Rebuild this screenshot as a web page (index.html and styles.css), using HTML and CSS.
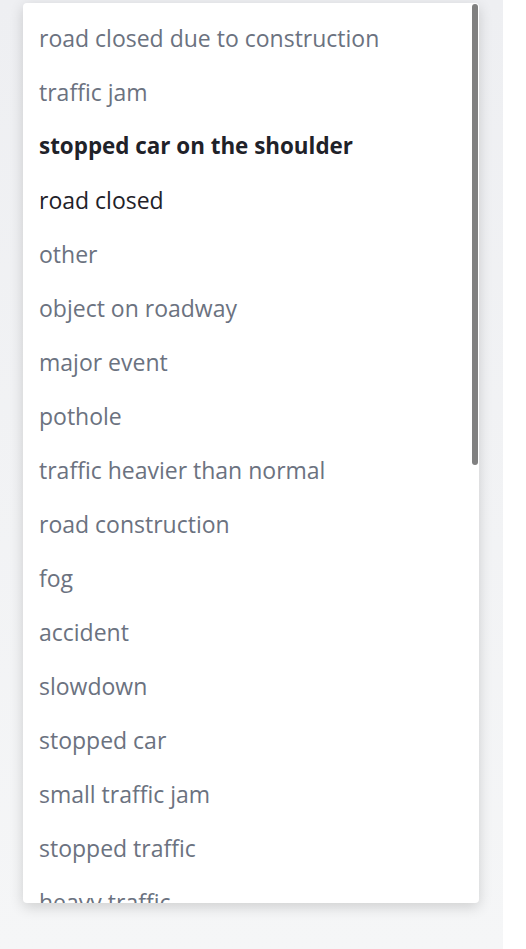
FILE: index.html
```html
<!DOCTYPE html>
<html>
<head>
<meta charset="utf-8">
<link rel="stylesheet" href="styles.css">
</head>
<body>
<div class="page">
  <div class="dropdown">
    <ul class="list">
      <li class="item">road closed due to construction</li>
      <li class="item">traffic jam</li>
      <li class="item selected">stopped car on the shoulder</li>
      <li class="item hover">road closed</li>
      <li class="item">other</li>
      <li class="item">object on roadway</li>
      <li class="item">major event</li>
      <li class="item">pothole</li>
      <li class="item">traffic heavier than normal</li>
      <li class="item">road construction</li>
      <li class="item">fog</li>
      <li class="item">accident</li>
      <li class="item">slowdown</li>
      <li class="item">stopped car</li>
      <li class="item">small traffic jam</li>
      <li class="item">stopped traffic</li>
      <li class="item">heavy traffic</li>
    </ul>
    <div class="thumb"></div>
  </div>
</div>
</body>
</html>
```
FILE: styles.css
```css
html, body {
  margin: 0;
  padding: 0;
  background: #ffffff;
}
.page {
  width: 503px;
  height: 949px;
  background: linear-gradient(#eeeff2, #f5f6f7);
  padding: 3px 0 0 23px;
  box-sizing: border-box;
}
.dropdown {
  position: relative;
  width: 456px;
  height: 900px;
  background: #ffffff;
  border-radius: 4px;
  box-shadow: 0 4px 14px rgba(0, 0, 0, 0.16);
  overflow: hidden;
}
.list {
  list-style: none;
  margin: 0;
  padding: 8px 0 0 0;
}
.item {
  height: 54px;
  line-height: 54px;
  padding-left: 16px;
  font-family: "Open Sans", "Noto Sans", sans-serif;
  font-size: 23px;
  color: #6b7280;
  white-space: nowrap;
}
.item.selected {
  font-weight: 700;
  font-size: 22.4px;
  color: #1f2229;
}
.item.hover {
  color: #1f2229;
}
.thumb {
  position: absolute;
  top: 1px;
  right: 1px;
  width: 6px;
  height: 461px;
  border-radius: 3px;
  background: #808080;
}
```
